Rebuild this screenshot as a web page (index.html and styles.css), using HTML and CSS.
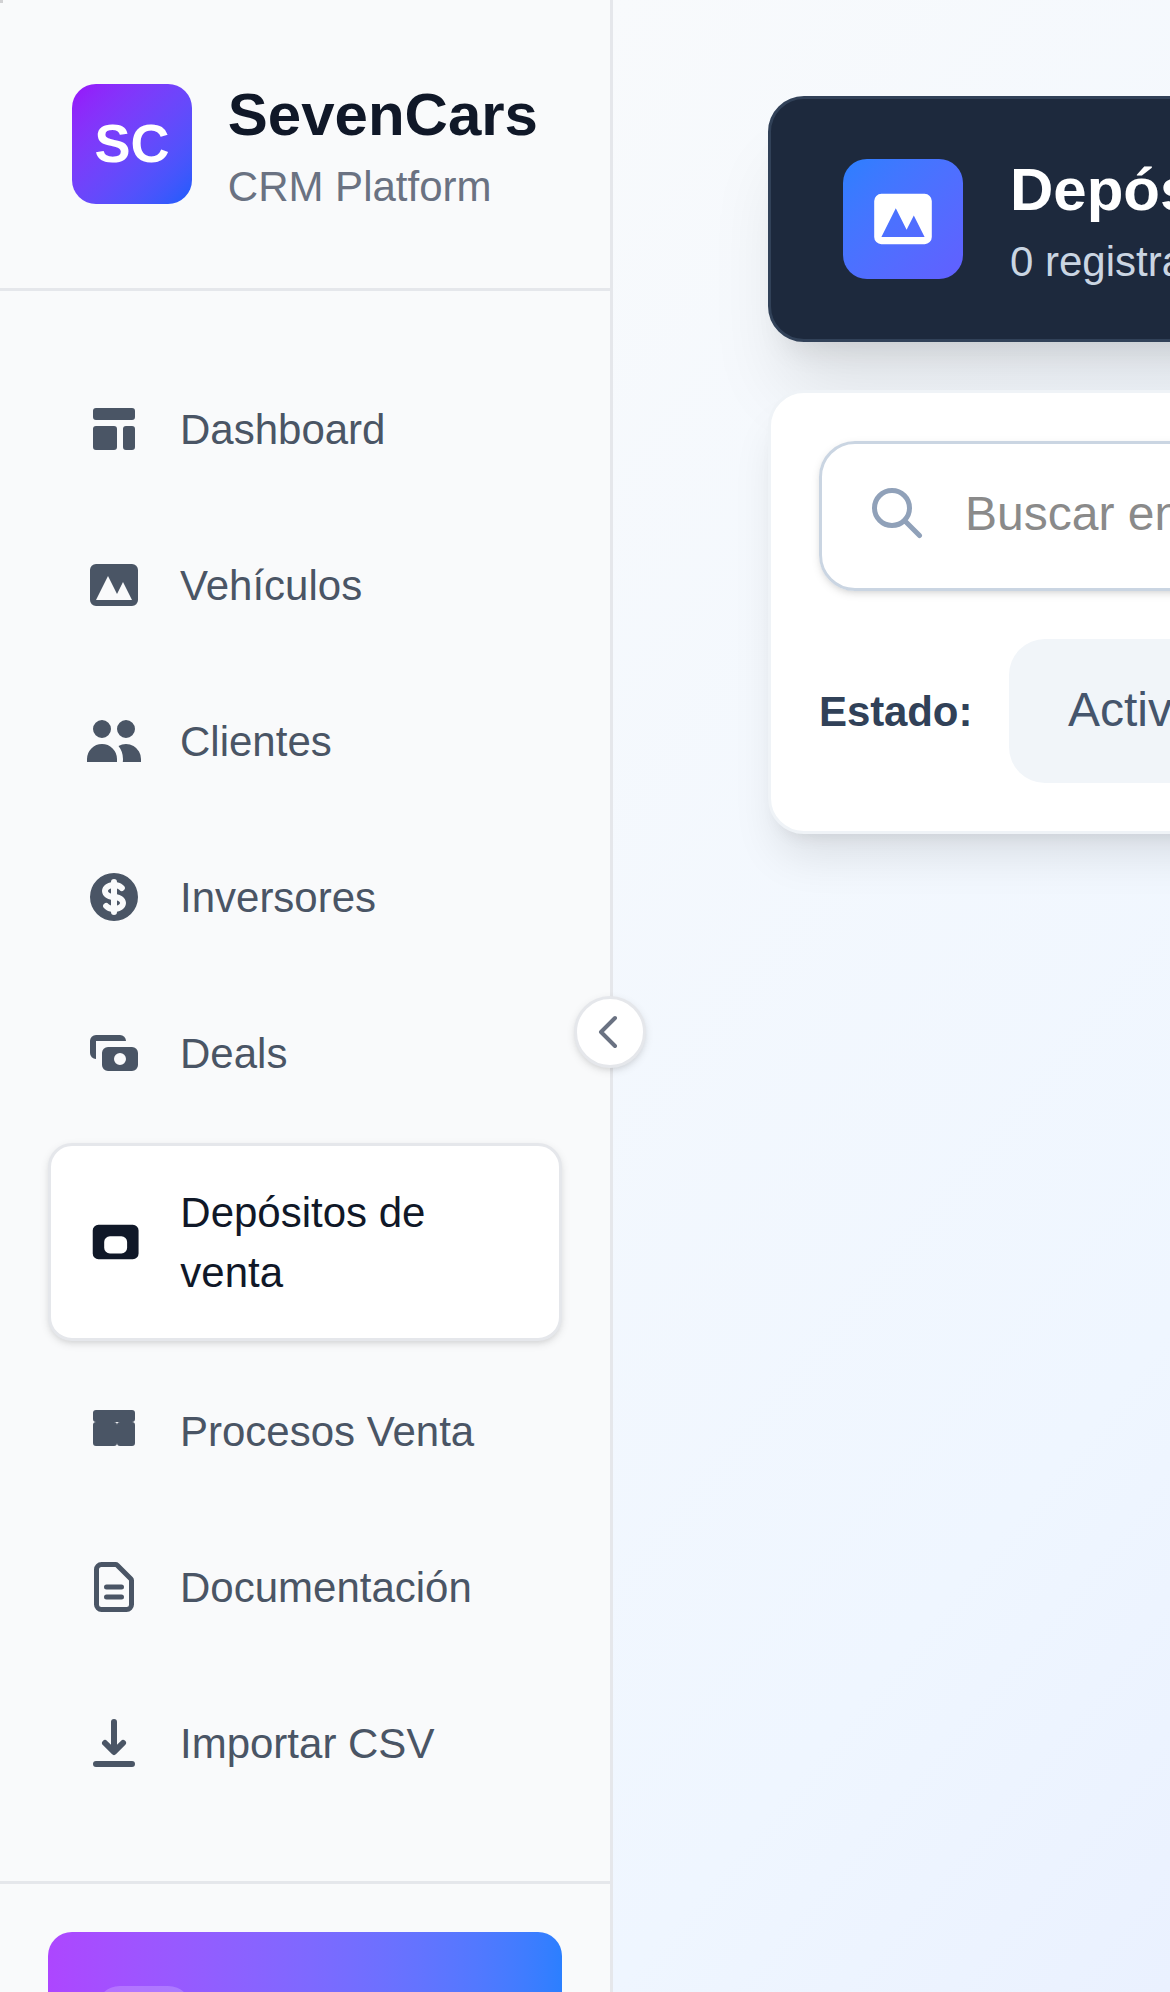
FILE: index.html
```html
<!DOCTYPE html>
<html lang="es">
<head>
<meta charset="utf-8">
<title>SevenCars CRM</title>
<link rel="stylesheet" href="styles.css">
</head>
<body>
<span class="corner"></span>
<div class="app">
  <aside class="sidebar">
    <header class="brand">
      <div class="logo">SC</div>
      <div class="brand-text">
        <h1 class="brand-name">SevenCars</h1>
        <p class="brand-sub">CRM Platform</p>
      </div>
    </header>
    <nav class="nav">
      <a class="item"><svg class="icon" viewBox="0 0 20 20"><path d="M3 4a1 1 0 011-1h12a1 1 0 011 1v2a1 1 0 01-1 1H4a1 1 0 01-1-1V4zM3 10a1 1 0 011-1h6a1 1 0 011 1v6a1 1 0 01-1 1H4a1 1 0 01-1-1v-6zM14 9a1 1 0 00-1 1v6a1 1 0 001 1h2a1 1 0 001-1v-6a1 1 0 00-1-1h-2z"/></svg><span class="label">Dashboard</span></a>
      <a class="item"><svg class="icon" viewBox="0 0 20 20"><path fill-rule="evenodd" d="M4 3a2 2 0 00-2 2v10a2 2 0 002 2h12a2 2 0 002-2V5a2 2 0 00-2-2H4zm12 12H4l4-8 3 6 2-4 3 6z"/></svg><span class="label">Vehículos</span></a>
      <a class="item"><svg class="icon" viewBox="0 0 20 20"><path d="M9 6a3 3 0 11-6 0 3 3 0 016 0zM17 6a3 3 0 11-6 0 3 3 0 016 0zM12.93 17c.046-.327.07-.66.07-1a6.97 6.97 0 00-1.5-4.33A5 5 0 0119 16v1h-6.07zM6 11a5 5 0 015 5v1H1v-1a5 5 0 015-5z"/></svg><span class="label">Clientes</span></a>
      <a class="item"><svg class="icon" viewBox="0 0 20 20"><path d="M8.433 7.418c.155-.103.346-.196.567-.267v1.698a2.305 2.305 0 01-.567-.267C8.07 8.34 8 8.114 8 8c0-.114.07-.34.433-.582zM11 12.849v-1.698c.22.071.412.164.567.267.364.243.433.468.433.582 0 .114-.07.34-.433.582a2.305 2.305 0 01-.567.267z"/><path fill-rule="evenodd" d="M10 18a8 8 0 100-16 8 8 0 000 16zm1-13a1 1 0 10-2 0v.092a4.535 4.535 0 00-1.676.662C6.602 6.234 6 7.009 6 8c0 .99.602 1.765 1.324 2.246.48.32 1.054.545 1.676.662v1.941c-.391-.127-.68-.317-.843-.504a1 1 0 10-1.51 1.31c.562.649 1.413 1.076 2.353 1.253V15a1 1 0 102 0v-.092a4.535 4.535 0 001.676-.662C13.398 13.766 14 12.991 14 12c0-.99-.602-1.765-1.324-2.246A4.535 4.535 0 0011 9.092V7.151c.391.127.68.317.843.504a1 1 0 101.511-1.31c-.563-.649-1.413-1.076-2.354-1.253V5z"/></svg><span class="label">Inversores</span></a>
      <a class="item"><svg class="icon" viewBox="0 0 20 20"><path fill-rule="evenodd" d="M4 4a2 2 0 00-2 2v4a2 2 0 002 2V6h10a2 2 0 00-2-2H4zm2 6a2 2 0 012-2h8a2 2 0 012 2v4a2 2 0 01-2 2H8a2 2 0 01-2-2v-4zm6 4a2 2 0 100-4 2 2 0 000 4z"/></svg><span class="label">Deals</span></a>
      <a class="item item-active"><svg class="icon" viewBox="0 0 20 20"><path fill-rule="evenodd" d="M4 4a2 2 0 00-2 2v8a2 2 0 002 2h12a2 2 0 002-2V6a2 2 0 00-2-2H4zm4 4a2 2 0 00-2 2v2a2 2 0 002 2h4a2 2 0 002-2v-2a2 2 0 00-2-2H8z"/></svg><span class="label">Depósitos de venta</span></a>
      <a class="item"><svg class="icon" viewBox="0 0 20 20"><path d="M3 4a1 1 0 011-1h12a1 1 0 011 1v2a1 1 0 01-1 1H4a1 1 0 01-1-1V4zM3 8a1 1 0 011-1h6a1 1 0 011 1v6a1 1 0 01-1 1H4a1 1 0 01-1-1V8zM11 8a1 1 0 011-1h4a1 1 0 011 1v6a1 1 0 01-1 1h-4a1 1 0 01-1-1V8z"/></svg><span class="label">Procesos Venta</span></a>
      <a class="item"><svg class="icon icon-line" viewBox="0 0 24 24"><path d="M9 12h6m-6 4h6m2 5H7a2 2 0 01-2-2V5a2 2 0 012-2h5.586a1 1 0 01.707.293l5.414 5.414a1 1 0 01.293.707V19a2 2 0 01-2 2z"/></svg><span class="label">Documentación</span></a>
      <a class="item"><svg class="icon" viewBox="0 0 20 20"><path fill-rule="evenodd" d="M3 17a1 1 0 011-1h12a1 1 0 110 2H4a1 1 0 01-1-1zm3.293-7.707a1 1 0 011.414 0L9 10.586V3a1 1 0 112 0v7.586l1.293-1.293a1 1 0 111.414 1.414l-3 3a1 1 0 01-1.414 0l-3-3a1 1 0 010-1.414z"/></svg><span class="label">Importar CSV</span></a>
    </nav>
    <footer class="side-footer">
      <div class="user-card"><div class="avatar"></div></div>
    </footer>
    <button class="toggle"><svg class="toggle-icon icon-line" viewBox="0 0 24 24"><path d="M15 19l-7-7 7-7"/></svg></button>
  </aside>
  <main class="main">
    <section class="page-header">
      <div class="page-icon"><svg viewBox="0 0 20 20"><path fill-rule="evenodd" d="M4 3a2 2 0 00-2 2v10a2 2 0 002 2h12a2 2 0 002-2V5a2 2 0 00-2-2H4zm12 12H4l4-8 3 6 2-4 3 6z"/></svg></div>
      <div class="page-text">
        <h2 class="page-title">Depósitos</h2>
        <p class="page-sub">0 registrados</p>
      </div>
    </section>
    <section class="filters">
      <div class="search">
        <svg class="search-icon icon-line" viewBox="0 0 24 24"><path d="M21 21l-6-6m2-5a7 7 0 11-14 0 7 7 0 0114 0z"/></svg>
        <span class="placeholder">Buscar en depósitos</span>
      </div>
      <div class="filter-row">
        <span class="filter-label">Estado:</span>
        <div class="select">Activos</div>
      </div>
    </section>
  </main>
</div>
</body>
</html>
```
FILE: styles.css
```css
* { box-sizing: border-box; margin: 0; padding: 0; }
html, body { height: 1992px; overflow: hidden; }
body {
  font-family: "Liberation Sans", Arial, sans-serif;
  font-size: 42px;
  line-height: 60px;
}
svg { display: block; fill: currentColor; }
.icon-line {
  fill: none;
  stroke: currentColor;
  stroke-width: 2;
  stroke-linecap: round;
  stroke-linejoin: round;
}
.corner {
  position: absolute;
  z-index: 5;
  width: 3px;
  height: 3px;
  background: #d1d1d3;
}
.app { display: flex; width: 1170px; height: 1992px; overflow: hidden; }

.sidebar {
  position: relative;
  z-index: 2;
  flex: none;
  width: 613px;
  height: 2136px;
  background: #f9fafb;
  border-right: 3px solid #e5e7eb;
}
.brand {
  display: flex;
  align-items: center;
  gap: 36px;
  height: 291px;
  padding: 0 72px;
  border-bottom: 3px solid #e5e7eb;
}
.logo {
  display: flex;
  align-items: center;
  justify-content: center;
  width: 120px;
  height: 120px;
  padding-bottom: 3px;
  border-radius: 24px;
  background: linear-gradient(to bottom right in oklab, #9810fa, #155dfc);
  color: #fff;
  font-size: 54px;
  font-weight: 700;
}
.brand-text, .page-text { padding-top: 2px; }
.brand-name { font-size: 60px; line-height: 84px; color: #101828; }
.brand-sub { color: #6a7282; }
.nav { display: flex; flex-direction: column; gap: 24px; padding: 72px 48px; }
.item {
  display: flex;
  align-items: center;
  gap: 36px;
  padding: 36px;
  border-radius: 24px;
  color: #4a5565;
}
.icon { flex: none; width: 60px; height: 60px; }
.label { margin: 1px 0 -1px; }
.item-active {
  background: #fff;
  border: 3px solid #e5e7eb;
  box-shadow: 0 3px 9px rgba(0, 0, 0, .1), 0 3px 6px -3px rgba(0, 0, 0, .1);
  color: #101828;
}
.item-active .icon { width: 57.3px; }
.side-footer { padding: 48px; border-top: 3px solid #e5e7eb; }
.user-card {
  height: 204px;
  padding: 54px 48px;
  border-radius: 24px;
  background: linear-gradient(to right in oklab, #ad46ff, #2b7fff);
}
.avatar { width: 96px; height: 96px; border-radius: 24px; background: rgba(255, 255, 255, .2); }
.toggle {
  position: absolute;
  right: -36px;
  top: 996px;
  display: flex;
  align-items: center;
  justify-content: center;
  width: 72px;
  height: 72px;
  border: 3px solid #e5e7eb;
  border-radius: 50%;
  background: #fff;
  box-shadow: 0 3px 9px rgba(0, 0, 0, .1), 0 3px 6px -3px rgba(0, 0, 0, .1);
  color: #6a7282;
}
.toggle-icon { flex: none; width: 48px; height: 48px; margin-right: 2px; }

.main {
  display: flex;
  flex: none;
  flex-direction: column;
  gap: 48px;
  width: 1674px;
  height: 1992px;
  padding: 96px 155px 0;
  background: linear-gradient(to bottom right in oklab, #f8fafc, #eff6ff, #e0e7ff);
}
.page-header {
  display: flex;
  align-items: center;
  gap: 47px;
  height: 246px;
  padding: 0 72px;
  border: 3px solid #314158;
  border-radius: 36px;
  background: #1d293d;
  box-shadow: 0 60px 75px -15px rgba(0, 0, 0, .1), 0 24px 30px -18px rgba(0, 0, 0, .1);
}
.page-icon {
  display: flex;
  align-items: center;
  justify-content: center;
  width: 120px;
  height: 120px;
  border-radius: 24px;
  background: linear-gradient(to bottom right in oklab, #2b7fff, #615fff);
  color: #fff;
}
.page-icon svg { width: 72px; height: 72px; }
.page-title { font-size: 60px; line-height: 84px; color: #fff; }
.page-sub { color: #cad5e2; }
.filters {
  display: flex;
  flex-direction: column;
  gap: 48px;
  padding: 48px;
  border: 3px solid #eff3f7;
  border-radius: 36px;
  background: #fff;
  box-shadow: 0 30px 45px -9px rgba(0, 0, 0, .1), 0 12px 18px -12px rgba(0, 0, 0, .1);
}
.search {
  display: flex;
  align-items: center;
  gap: 38px;
  height: 150px;
  padding: 0 45px 6px;
  border: 3px solid #cad5e2;
  border-radius: 36px;
  box-shadow: 0 3px 9px rgba(0, 0, 0, .1), 0 3px 6px -3px rgba(0, 0, 0, .1);
}
.search-icon { flex: none; width: 60px; height: 60px; color: #90a1b9; }
.placeholder { padding-top: 2px; color: #8a8a8a; font-size: 48px; white-space: nowrap; }
.filter-row { display: flex; align-items: center; gap: 36px; }
.filter-label { width: 154px; padding-top: 2px; color: #314158; font-weight: 700; letter-spacing: -0.1px; }
.select {
  flex: 1;
  height: 144px;
  padding: 0 59px;
  border-radius: 36px;
  background: #f1f5f9;
  color: #45556c;
  font-size: 48px;
  line-height: 142px;
}
```
